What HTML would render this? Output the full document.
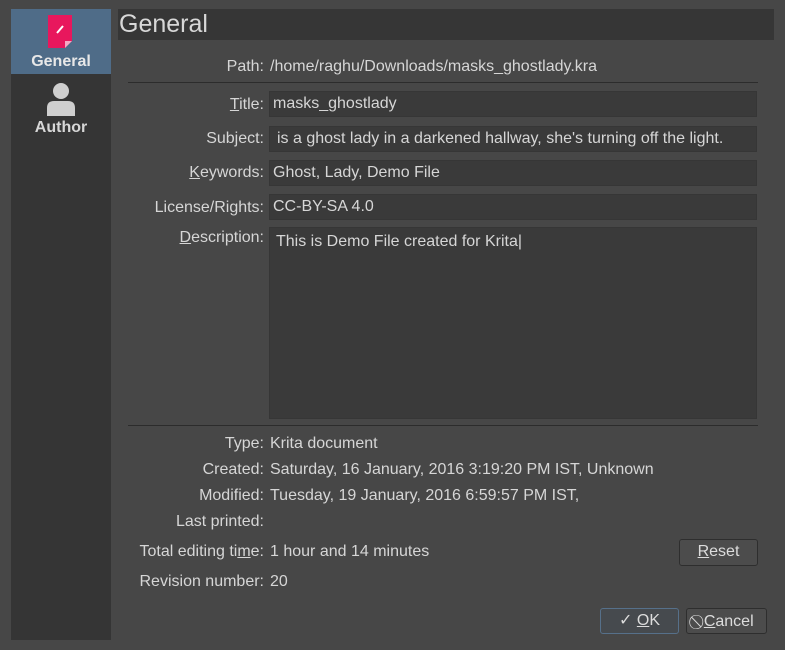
<html><head><style>
body{margin:0;width:785px;height:650px;background:#474747;font-family:"Liberation Sans",sans-serif;color:#d6d6d6;position:relative;overflow:hidden;font-size:16px}
.a{position:absolute}
.lab{position:absolute;right:521px;text-align:right;white-space:nowrap}
.val{position:absolute;left:270px;white-space:nowrap}
.f{position:absolute;left:269px;width:488px;height:26px;background:#3a3a3a;border:1px solid #363636;box-sizing:border-box;padding:3px 3px;white-space:nowrap;overflow:hidden}
.btn{position:absolute;border:1px solid #2e2e2e;border-radius:3px;background:#4c4c4c;text-align:center;box-sizing:border-box;line-height:24px;color:#dcdcdc;font-size:16px}
u{text-decoration:underline}
</style></head><body>
<div class="a" style="left:11px;top:9px;width:100px;height:631px;background:#353535"></div>
<div class="a" style="left:11px;top:9px;width:100px;height:65px;background:#4f6c88"></div>
<svg class="a" style="left:48px;top:15px" width="26" height="34"><path d="M0 0H24V26L17 33H0Z" fill="#e8175d"/><path d="M17 33L24 26H17Z" fill="#f7a8c4"/><path d="M9 18L15 11" stroke="#fff" stroke-width="2"/></svg>
<div class="a" style="left:11px;top:53px;width:100px;text-align:center;font-weight:bold;font-size:16px;color:#e8e8e8">General</div>
<svg class="a" style="left:46px;top:82px" width="30" height="34"><circle cx="15" cy="9" r="8" fill="#cfcfcf"/><path d="M1 34V26Q1 19 8 19H22Q29 19 29 26V34Z" fill="#cfcfcf"/></svg>
<div class="a" style="left:11px;top:119px;width:100px;text-align:center;font-weight:bold;font-size:16px;color:#d6d6d6">Author</div>
<div class="a" style="left:118px;top:9px;width:655px;height:31px;background:#363636;font-size:25px;line-height:31px;padding-left:1px;color:#d8d8d8">General</div>
<div class="lab" style="top:58px">Path:</div><div class="val" style="top:58px">/home/raghu/Downloads/masks_ghostlady.kra</div>
<div class="a" style="left:128px;top:82px;width:630px;height:1px;background:#2c2c2c"></div>
<div class="lab" style="top:96px"><u>T</u>itle:</div><div class="f" style="top:91px">masks_ghostlady</div>
<div class="lab" style="top:130px">Subject:</div><div class="f" style="top:126px;padding-left:7px">is a ghost lady in a darkened hallway, she's turning off the light.</div>
<div class="lab" style="top:164px"><u>K</u>eywords:</div><div class="f" style="top:160px">Ghost, Lady, Demo File</div>
<div class="lab" style="top:199px">License/Rights:</div><div class="f" style="top:194px">CC-BY-SA 4.0</div>
<div class="lab" style="top:229px"><u>D</u>escription:</div><div class="f" style="top:227px;height:192px;padding:5px 6px">This is Demo File created for Krita|</div>
<div class="a" style="left:128px;top:425px;width:630px;height:1px;background:#2c2c2c"></div>
<div class="lab" style="top:435px">Type:</div><div class="val" style="top:435px">Krita document</div>
<div class="lab" style="top:461px">Created:</div><div class="val" style="top:461px">Saturday, 16 January, 2016 3:19:20 PM IST, Unknown</div>
<div class="lab" style="top:487px">Modified:</div><div class="val" style="top:487px">Tuesday, 19 January, 2016 6:59:57 PM IST,</div>
<div class="lab" style="top:513px">Last printed:</div>
<div class="lab" style="top:543px">Total editing ti<u>m</u>e:</div><div class="val" style="top:543px">1 hour and 14 minutes</div>
<div class="btn" style="left:679px;top:539px;width:79px;height:27px"><u>R</u>eset</div>
<div class="lab" style="top:573px">Revision number:</div><div class="val" style="top:573px">20</div>
<div class="btn" style="left:600px;top:608px;width:79px;height:26px;border-color:#56708a;background:#464a4e">✓ <u>O</u>K</div>
<div class="btn" style="left:686px;top:608px;width:81px;height:26px"><span style="font-size:14px">⃠</span> <u>C</u>ancel</div>
</body></html>
